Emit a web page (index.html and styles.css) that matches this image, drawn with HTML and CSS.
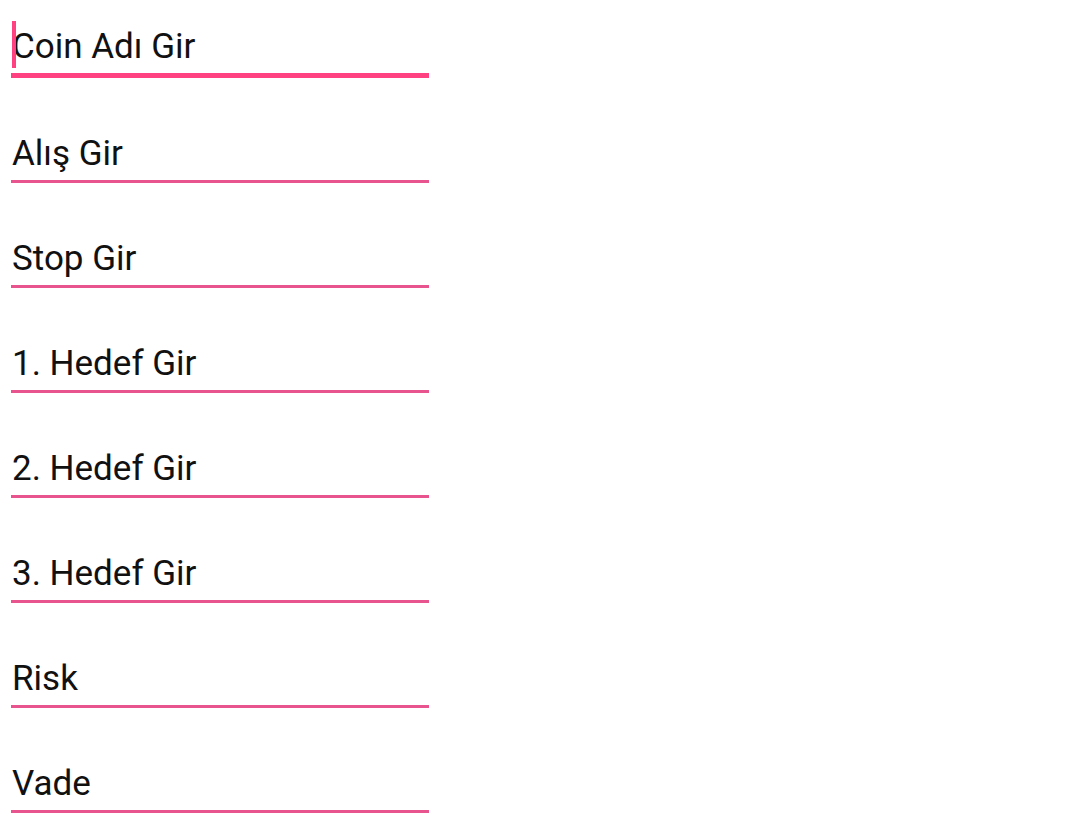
FILE: index.html
```html
<!DOCTYPE html>
<html lang="tr">
<head>
<meta charset="utf-8">
<title>Coin Form</title>
<link rel="stylesheet" href="styles.css">
</head>
<body>
<form class="form">
  <div class="field field-focused">
    <span class="cursor"></span>
    <span class="label">Coin Adı Gir</span>
  </div>
  <div class="field"><span class="label">Alış Gir</span></div>
  <div class="field"><span class="label">Stop Gir</span></div>
  <div class="field"><span class="label">1. Hedef Gir</span></div>
  <div class="field"><span class="label">2. Hedef Gir</span></div>
  <div class="field"><span class="label">3. Hedef Gir</span></div>
  <div class="field"><span class="label">Risk</span></div>
  <div class="field"><span class="label">Vade</span></div>
</form>
</body>
</html>
```
FILE: styles.css
```css
html, body {
  margin: 0;
  padding: 0;
  background: #ffffff;
}

body {
  font-family: Roboto, "Noto Sans", sans-serif;
  color: #111111;
  overflow: hidden;
}

.form {
  display: flex;
  flex-direction: column;
  width: 418px;
  margin-left: 11px;
}

.field {
  position: relative;
  box-sizing: border-box;
  height: 105px;
  flex: none;
  display: flex;
  align-items: flex-end;
  padding: 0 0 6px 1px;
  border-bottom: 3px solid #e8558e;
}

.field-focused {
  height: 78px;
  border-bottom: 5px solid #ff4081;
}

.label {
  font-size: 35px;
  line-height: 40px;
}

.cursor {
  position: absolute;
  left: 1px;
  top: 21px;
  width: 4px;
  height: 47px;
  background: #ff4081;
}
```
